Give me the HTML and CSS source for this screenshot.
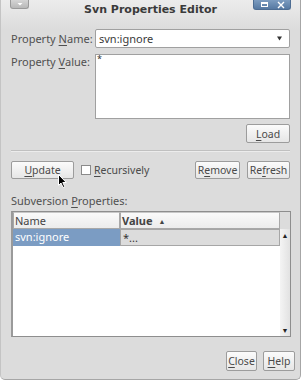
FILE: index.html
```html
<!DOCTYPE html>
<html lang="en">
<head>
    <meta charset="UTF-8">
    <title>Svn Properties Editor</title>
    <link rel="stylesheet" href="styles.css">
</head>
<body>
    <div class="window">
        <div class="titlebar">
            <div class="tab tab-menu">
                <svg width="8" height="5" viewBox="0 0 8 5"><path d="M1.5 1 L6.5 1 L4 3.5 Z" fill="#ffffff"/></svg>
            </div>
            <div class="title">Svn Properties Editor</div>
            <div class="tab tab-ctrl">
                <svg width="9" height="7" viewBox="0 0 9 7"><rect x="1.5" y="1.5" width="6" height="4" fill="none" stroke="#ffffff" stroke-width="1"/><rect x="1" y="1" width="7" height="2" fill="#ffffff"/></svg>
                <svg width="8" height="8" viewBox="0 0 8 8"><path d="M1 1 L7 7 M7 1 L1 7" stroke="#ffffff" stroke-width="1.4"/></svg>
            </div>
        </div>

        <div class="content">
            <div class="field">
                <label class="label">Property <u>N</u>ame:</label>
                <div class="combo">
                    <span>svn:ignore</span>
                    <svg width="5" height="5" viewBox="0 0 5 5"><path d="M0 0.5 L5 0.5 L2.5 4.5 Z" fill="#333"/></svg>
                </div>
            </div>
            <div class="field field-value">
                <label class="label">Property <u>V</u>alue:</label>
                <div class="textarea">*</div>
            </div>
            <div class="load-row">
                <button class="btn btn-load"><u>L</u>oad</button>
            </div>
            <div class="separator"></div>
            <div class="action-row">
                <button class="btn btn-update"><u>U</u>pdate</button>
                <label class="check"><span class="box"></span><span><u>R</u>ecursively</span></label>
                <div class="spacer"></div>
                <button class="btn btn-remove">R<u>e</u>move</button>
                <button class="btn btn-refresh">Re<u>f</u>resh</button>
            </div>
            <div class="section-label">Subversion <u>P</u>roperties:</div>
            <div class="table">
                <div class="table-head">
                    <div class="th th-name">Name</div>
                    <div class="th th-value">Value <span class="sort">&#9650;</span></div>
                    <div class="th-corner"></div>
                </div>
                <div class="table-body">
                    <div class="rows">
                        <div class="row">
                            <div class="td td-name">svn:ignore</div>
                            <div class="td td-value">*...</div>
                        </div>
                    </div>
                    <div class="scrollbar">
                        <span class="arrow">&#9650;</span>
                        <span class="arrow">&#9660;</span>
                    </div>
                </div>
            </div>
        </div>

        <div class="footer">
            <button class="btn btn-close"><u>C</u>lose</button>
            <button class="btn btn-help"><u>H</u>elp</button>
        </div>

        <svg class="cursor" width="10" height="15" viewBox="0 0 10 15">
            <path d="M0.5 0.5 L0.5 11.5 L3 9 L5 13.5 L6.8 12.7 L4.8 8.5 L8.3 8.5 Z" fill="#000" stroke="#fff" stroke-width="1"/>
        </svg>
    </div>
</body>
</html>
```

FILE: styles.css
```css
body {
    margin: 0;
    background: #ffffff;
    font-family: "Noto Sans", "Open Sans", sans-serif;
    font-size: 11px;
    color: #4a4a4a;
}
u {
    text-decoration: underline;
    text-underline-offset: 2px;
}
.window {
    position: relative;
    width: 301px;
    height: 380px;
    box-sizing: border-box;
    background: #dcdcdc;
    border: 1px solid #a6a6a6;
    border-top: none;
    border-left-color: #c4c4c4;
    border-radius: 0 0 5px 5px;
    overflow: hidden;
}
.titlebar {
    height: 29px;
    display: grid;
    grid-template-columns: 1fr auto 1fr;
    background: linear-gradient(#ececec, #dcdcdc);
}
.title {
    font-family: "DejaVu Sans", sans-serif;
    font-weight: bold;
    font-size: 11px;
    color: #3a3a3a;
    line-height: 20px;
}
.tab {
    align-self: start;
    display: flex;
    align-items: center;
    justify-content: center;
    border: 1px solid #9a9a9a;
    border-top: none;
    border-radius: 0 0 3px 3px;
}
.tab-menu {
    justify-self: start;
    margin-left: 9px;
    width: 17px;
    height: 8px;
    background: linear-gradient(#d4d4d4, #b8b8b8);
}
.tab-ctrl {
    justify-self: end;
    margin-right: 9px;
    width: 36px;
    height: 9px;
    gap: 8px;
    border-color: #4d6d93;
    background: linear-gradient(#7c9cc0, #5679a2);
}
.content {
    padding: 0 10px 0 10px;
}
.field {
    display: flex;
}
.label {
    width: 84px;
    line-height: 19px;
    color: #505050;
}
.combo {
    flex: 1;
    height: 19px;
    box-sizing: border-box;
    border: 1px solid #a0a0a0;
    border-radius: 2px;
    background: #ffffff;
    display: flex;
    align-items: center;
    justify-content: space-between;
    padding: 0 7px 0 3px;
    font-size: 11px;
    color: #3a3a3a;
}
.field-value {
    margin-top: 6px;
}
.field-value .label {
    line-height: 14px;
    padding-top: 1px;
}
.textarea {
    flex: 1;
    height: 65px;
    box-sizing: border-box;
    border: 1px solid #a0a0a0;
    background: #ffffff;
    padding: 0 1px;
    font-size: 9px;
    line-height: 8px;
    color: #333;
}
.load-row {
    display: flex;
    justify-content: flex-end;
    margin-top: 5px;
}
.btn {
    font-family: "Noto Sans", "Open Sans", sans-serif;
    font-size: 10.5px;
    color: #4a4a4a;
    box-sizing: border-box;
    height: 19px;
    padding: 0;
    border: 1px solid #9c9c9c;
    border-radius: 2px;
    background: linear-gradient(#fbfbfb, #e6e6e6);
    line-height: 16px;
}
.btn-load {
    width: 44px;
}
.separator {
    margin-top: 7px;
    height: 1px;
    background: #c0c0c0;
    border-bottom: 1px solid #ececec;
}
.action-row {
    margin-top: 9px;
    display: flex;
    align-items: center;
    gap: 7px;
}
.action-row .btn {
    height: 18px;
}
.btn-update {
    width: 63px;
}
.check {
    display: flex;
    align-items: center;
    gap: 3px;
    font-size: 10.5px;
}
.box {
    width: 10px;
    height: 10px;
    box-sizing: border-box;
    border: 1px solid #8a8a8a;
    background: #ffffff;
}
.spacer {
    flex: 1;
}
.btn-remove {
    width: 45px;
}
.btn-refresh {
    width: 43px;
}
.section-label {
    margin-top: 14px;
    line-height: 16px;
    color: #505050;
}
.table {
    margin-top: 2px;
    margin-right: -1px;
    height: 126px;
    box-sizing: border-box;
    border: 1px solid #8e8e8e;
    border-left: 2px solid #9a9a9a;
    display: flex;
    flex-direction: column;
}
.table-head {
    display: flex;
    height: 17px;
    background: #dcdcdc;
}
.th {
    box-sizing: border-box;
    height: 17px;
    border: 1px solid #a8a8a8;
    border-top-color: #c8c8c8;
    background: linear-gradient(#fafafa, #ececec);
    line-height: 15px;
    padding-left: 1px;
    color: #444;
}
.th-name {
    width: 107px;
}
.th-value {
    width: 160px;
    font-weight: bold;
}
.sort {
    font-size: 7px;
    font-weight: normal;
    vertical-align: 1px;
    margin-left: 3px;
}
.th-corner {
    flex: 1;
}
.table-body {
    flex: 1;
    display: flex;
}
.rows {
    width: 267px;
    background: #ffffff;
}
.row {
    display: flex;
    height: 17px;
}
.td {
    box-sizing: border-box;
    height: 17px;
    line-height: 16px;
    padding-left: 2px;
}
.td-name {
    width: 107px;
    background: #7b9cc3;
    color: #ffffff;
}
.td-value {
    width: 160px;
    background: #dcdcdc;
    border: 1px solid #a6a6a6;
    color: #333;
}
.scrollbar {
    flex: 1;
    background: linear-gradient(90deg, #f4f4f4, #e2e2e2);
    display: flex;
    flex-direction: column;
    justify-content: space-between;
    align-items: center;
    font-size: 7px;
    color: #222;
    padding: 2px 0 1px;
}
.footer {
    margin-top: 14px;
    padding-right: 5px;
    display: flex;
    justify-content: flex-end;
    gap: 6px;
}
.footer .btn {
    height: 20px;
    line-height: 17px;
}
.btn-close {
    width: 31px;
}
.btn-help {
    width: 32px;
}
.cursor {
    position: absolute;
    left: 57px;
    top: 174px;
}
```
